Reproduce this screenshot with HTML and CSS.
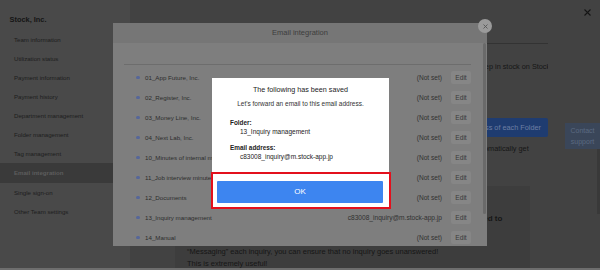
FILE: index.html
```html
<!DOCTYPE html>
<html lang="en">
<head>
  <meta charset="UTF-8">
  <title>Email integration</title>
  <link rel="stylesheet" href="styles.css">
</head>
<body>
  <div class="app">
    <aside class="sidebar">
      <h1>Stock, Inc.</h1>
      <ul class="menu">
        <li>Team information</li>
        <li>Utilization status</li>
        <li>Payment information</li>
        <li>Payment history</li>
        <li>Department management</li>
        <li>Folder management</li>
        <li>Tag management</li>
        <li class="active">Email integration</li>
        <li>Single sign-on</li>
        <li>Other Team settings</li>
      </ul>
    </aside>

    <main class="main">
      <div class="content">
        <h2 class="page-title">Email integration</h2>
        <p class="lead">When you set an email address for every Folder, you can forward any of your emails to it and keep in stock on Stock.</p>
        <div class="btn-row">
          <span class="btn-primary">Check the email address of each Folder</span>
        </div>
        <p class="lead">Emails you forward are saved as messages in the Folder shared with your team, so you can automatically get<br>notified of new inquiries.</p>

        <div class="card">
          <h3>Useful ways to use it<br>Inquiries from your website's contact form and other channels can be forwarded to<br>Stock.</h3>
          <p>“Messaging” each inquiry, you can ensure that no inquiry goes unanswered!<br>This is extremely useful!</p>
        </div>
      </div>

      <div class="main-side">
        <svg class="page-close" width="7" height="7" viewBox="0 0 7 7">
          <path d="M0.5 0.5 L6.5 6.5 M6.5 0.5 L0.5 6.5" stroke="#151515" stroke-width="1.1"/>
        </svg>
        <div class="contact">Contact<br>support</div>
      </div>
      <div class="page-scroll"></div>
    </main>
  </div>
  <div class="hbar"></div>

  <!-- Email integration modal (behind the confirmation) -->
  <div class="modal">
    <div class="modal-head">Email integration</div>
    <div class="modal-body">
      <div class="modal-filter"></div>
      <ul class="folders">
        <li><span class="dot"></span><span class="name">01_App Future, Inc.</span><span class="addr">(Not set)</span><span class="edit">Edit</span></li>
        <li><span class="dot"></span><span class="name">02_Register, Inc.</span><span class="addr">(Not set)</span><span class="edit">Edit</span></li>
        <li><span class="dot"></span><span class="name">03_Money Line, Inc.</span><span class="addr">(Not set)</span><span class="edit">Edit</span></li>
        <li><span class="dot"></span><span class="name">04_Next Lab, Inc.</span><span class="addr">(Not set)</span><span class="edit">Edit</span></li>
        <li><span class="dot"></span><span class="name">10_Minutes of internal meetings</span><span class="addr">(Not set)</span><span class="edit">Edit</span></li>
        <li><span class="dot"></span><span class="name">11_Job interview minutes</span><span class="addr">(Not set)</span><span class="edit">Edit</span></li>
        <li><span class="dot"></span><span class="name">12_Documents</span><span class="addr">(Not set)</span><span class="edit">Edit</span></li>
        <li><span class="dot"></span><span class="name">13_Inquiry management</span><span class="addr">c83008_inquiry@m.stock-app.jp</span><span class="edit">Edit</span></li>
        <li><span class="dot"></span><span class="name">14_Manual</span><span class="addr">(Not set)</span><span class="edit">Edit</span></li>
      </ul>
      <div class="scroll-thumb"></div>
    </div>
  </div>
  <span class="modal-close">
    <svg width="5" height="5" viewBox="0 0 5 5">
      <path d="M0.5 0.5 L4.5 4.5 M4.5 0.5 L0.5 4.5" stroke="#555" stroke-width="0.9"/>
    </svg>
  </span>

  <!-- saved confirmation -->
  <div class="dialog">
    <p class="dialog-title">The following has been saved</p>
    <p class="dialog-sub">Let's forward an email to this email address.</p>
    <dl class="saved">
      <dt>Folder:</dt>
      <dd>13_Inquiry management</dd>
      <dt class="gap">Email address:</dt>
      <dd>c83008_inquiry@m.stock-app.jp</dd>
    </dl>
    <button class="ok">OK</button>
  </div>
  <div class="highlight"></div>
</body>
</html>
```

FILE: styles.css
```css
body {
  margin: 0;
  width: 600px;
  height: 270px;
  overflow: hidden;
  position: relative;
  font-family: "Liberation Sans", Arial, sans-serif;
  color: #161616;
  background-color: #424242;
}

.app {
  display: grid;
  grid-template-columns: 130px 1fr;
  height: 268px;
  overflow: hidden;
}

.hbar {
  height: 2px;
  background-color: #6e6e6e;
}

/* Sidebar */
.sidebar {
  background-color: #494949;
  padding-top: 14px;
}

.sidebar h1 {
  margin: 0;
  padding-left: 9.5px;
  font-size: 7.4px;
  line-height: 11px;
  color: #151515;
}

.menu {
  list-style: none;
  margin: 4.75px 0 0;
  padding: 0;
}

.menu li {
  padding-left: 14px;
  font-size: 6.1px;
  line-height: 19.1px;
  color: #1d1d1d;
  white-space: nowrap;
}

.menu li.active {
  background-color: #3a3a3a;
  color: #5d5d5d;
  font-weight: bold;
}

/* Main page */
.main {
  position: relative;
  display: flex;
}

.content {
  flex: 0 0 373px;
  margin-left: 45px;
  overflow: hidden;
}

.page-title {
  margin: 0;
  height: 23px;
  padding-top: 20px;
  font-size: 10px;
  line-height: 20px;
  border-bottom: 1px solid #333;
}

.lead {
  margin: 16.5px 0 0;
  font-size: 7.3px;
  line-height: 11px;
  white-space: nowrap;
}

.btn-row {
  display: flex;
  justify-content: flex-end;
  margin-top: 46.5px;
}

.btn-primary {
  height: 19px;
  padding: 0 7px;
  line-height: 19px;
  font-size: 7.3px;
  white-space: nowrap;
  color: #6d7ea3;
  background-color: #1f3c70;
  border-radius: 2px;
}

.btn-row + .lead {
  margin-top: 5.5px;
}

.card {
  width: 355px;
  margin-top: 21px;
  padding: 15px 0 0 12px;
  box-sizing: border-box;
  height: 90px;
  background-color: #3d3d3d;
}

.card h3 {
  margin: 0;
  font-size: 8px;
  line-height: 12px;
  white-space: nowrap;
}

.card p {
  margin: 9.5px 0 0;
  font-size: 7.5px;
  line-height: 11.5px;
  white-space: nowrap;
}

.main-side {
  flex: 1;
  display: flex;
  flex-direction: column;
  align-items: flex-end;
  padding-top: 9px;
}

.page-close {
  margin-right: 9px;
}

.contact {
  width: 35px;
  margin-top: 107px;
  padding: 2px 0;
  font-size: 7px;
  line-height: 11px;
  text-align: center;
  color: #5a6a82;
  background-color: #3a4659;
}

.page-scroll {
  position: absolute;
  right: 0;
  top: 149px;
  width: 3px;
  height: 65px;
  background-color: #393939;
}

/* Email integration modal */
.modal {
  position: absolute;
  left: 113px;
  top: 23px;
  width: 374px;
  height: 223px;
  overflow: hidden;
  background-color: #7e7e7e;
}

.modal-head {
  height: 20px;
  line-height: 20px;
  text-align: center;
  font-size: 7.5px;
  color: #3d3d3d;
  background-color: #767676;
}

.modal-body {
  position: relative;
  padding: 0 16px 0 11px;
}

.modal-filter {
  height: 21px;
  border-bottom: 1px solid #6d6d6d;
}

.folders {
  list-style: none;
  margin: 0;
  padding: 2.3px 0 0;
}

.folders li {
  display: flex;
  align-items: center;
  height: 20px;
  padding-left: 12px;
}

.dot {
  width: 3.5px;
  height: 3.5px;
  margin-right: 5.5px;
  border-radius: 50%;
  background-color: #56679a;
}

.name {
  flex: 1;
  font-size: 6.2px;
  color: #2d2d2d;
  white-space: nowrap;
}

.addr {
  margin-right: 9px;
  font-size: 6.6px;
  color: #313131;
}

.edit {
  width: 20px;
  height: 13px;
  line-height: 13px;
  text-align: center;
  font-size: 6.6px;
  color: #3a3a3a;
  background-color: #868686;
  border-radius: 2px;
}

.scroll-thumb {
  position: absolute;
  right: 1px;
  top: 0;
  width: 3px;
  height: 171px;
  border-radius: 2px;
  background-color: #6a6a6a;
}

.modal-close {
  position: absolute;
  left: 478px;
  top: 19px;
  width: 14px;
  height: 14px;
  display: flex;
  align-items: center;
  justify-content: center;
  border-radius: 50%;
  background-color: #9a9a9a;
}

/* Saved dialog */
.dialog {
  position: absolute;
  left: 212px;
  top: 78px;
  width: 177px;
  padding: 7px 0 5px;
  background-color: #fff;
  color: #222;
}

.dialog p {
  margin: 0;
  text-align: center;
}

.dialog-title {
  font-size: 7.2px;
  line-height: 10px;
}

.dialog .dialog-sub {
  margin-top: 3.5px;
  font-size: 6.5px;
  line-height: 9px;
  color: #333;
}

.saved {
  margin: 10.55px 0 0;
  padding-left: 18px;
  font-size: 6.5px;
  line-height: 9.3px;
}

.saved dt {
  font-weight: bold;
  font-size: 6.4px;
}

.saved dt.gap {
  margin-top: 6.4px;
}

.saved dd {
  margin-left: 10px;
}

.ok {
  display: block;
  width: 166px;
  height: 22px;
  margin: 19.35px 0 0 5px;
  padding: 0;
  border: none;
  border-radius: 1px;
  font-family: inherit;
  font-size: 8px;
  color: #fff;
  background-color: #3d85f0;
}

.highlight {
  position: absolute;
  left: 211px;
  top: 172px;
  width: 180px;
  height: 37px;
  box-sizing: border-box;
  border: 2.5px solid #e3101c;
}
```
